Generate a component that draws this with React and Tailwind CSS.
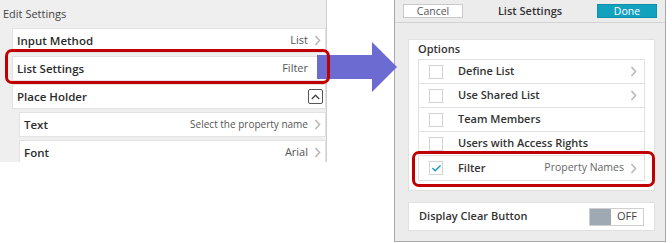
import { Check } from "lucide-react";

const font = { fontFamily: '"Open Sans", "Noto Sans", sans-serif' };

const Chevron = ({ className = "" }) => (
  <svg width="7" height="11" viewBox="0 0 7 11" className={className}>
    <polyline points="1.5,1 5.5,5.5 1.5,10" fill="none" stroke="#b9b9b9" strokeWidth="1.6" />
  </svg>
);

const LeftRow = ({ label, value, small, chevron = true, indent }) => (
  <div
    className={`flex items-center h-[25px] bg-white border border-[#e2e2e2] pl-[4px] pr-[4px] ${
      indent ? "ml-[7px]" : ""
    }`}
  >
    <span className="text-[11.5px] font-semibold text-[#2b2b2b]">{label}</span>
    <span className={`ml-auto text-[#555] ${small ? "text-[10px]" : "text-[11px]"}`}>{value}</span>
    <span className="w-[13px] flex justify-end">{chevron && <Chevron />}</span>
  </div>
);

const OptionRow = ({ label, value, checked, chevron }) => (
  <div className="flex items-center h-[24px] border-b border-[#e0e0e0] last:border-b-0">
    <div className="ml-[10px] w-[14px] h-[14px] border border-[#d4d4d4] bg-white flex items-center justify-center">
      {checked && <Check className="w-[11px] h-[11px] text-[#1597c9]" strokeWidth={3} />}
    </div>
    <span className="ml-[15px] text-[11px] font-semibold text-[#333]">{label}</span>
    {value && <span className="ml-auto text-[10.5px] text-[#666]">{value}</span>}
    <span className={`${value ? "" : "ml-auto"} w-[20px] flex justify-start pl-[6px]`}>
      {chevron && <Chevron />}
    </span>
  </div>
);

export default function App() {
  return (
    <div className="relative w-[672px] h-[243px] bg-white overflow-hidden" style={font}>
      <div className="flex items-start">
        {/* Edit settings panel */}
        <div className="w-[327px] h-[162px] bg-[#efefef] border-r border-[#cfcfcf] overflow-hidden">
          <div className="h-[28px] pl-[3px] pt-[6px] text-[11px] text-[#444]">Edit Settings</div>
          <div className="pl-[12px] flex flex-col gap-[3px]">
            <LeftRow label="Input Method" value="List" />
            <LeftRow label="List Settings" value="Filter" chevron={false} />
            <div className="flex items-center h-[25px] bg-white border border-[#e2e2e2] pl-[4px] pr-[2px]">
              <span className="text-[11.5px] font-semibold text-[#2b2b2b]">Place Holder</span>
              <div className="ml-auto w-[15px] h-[15px] border border-[#555] rounded-[2px] bg-white flex items-center justify-center">
                <svg width="9" height="6" viewBox="0 0 9 6">
                  <polyline points="0.8,5 4.5,1.2 8.2,5" fill="none" stroke="#444" strokeWidth="1.3" />
                </svg>
              </div>
            </div>
            <LeftRow label="Text" value="Select the property name" small indent />
            <LeftRow label="Font" value="Arial" indent />
          </div>
        </div>

        {/* List settings panel */}
        <div className="ml-[67px] w-[272px] h-[242px] bg-[#ececec] border border-[#a9a9a9] border-t-0 flex flex-col">
          <div className="h-[23px] flex items-center px-[8px] border-b border-[#d2d2d2]">
            <button className="w-[60px] h-[14px] bg-white border border-[#c9c9c9] text-[10.5px] leading-none text-[#555]">
              Cancel
            </button>
            <span className="flex-1 text-center text-[11px] font-semibold text-[#333]">List Settings</span>
            <button className="w-[60px] h-[14px] bg-[#13a1c0] border border-[#0e8ea9] text-[10.5px] leading-none text-white">
              Done
            </button>
          </div>

          <div className="mt-[16px] ml-[13px] mr-[10px] bg-white border border-[#e0e0e0] px-[9px] pb-[9px]">
            <div className="h-[19px] pt-[3px] text-[11px] font-semibold text-[#333] leading-none">Options</div>
            <div className="border border-[#e0e0e0]">
              <OptionRow label="Define List" chevron />
              <OptionRow label="Use Shared List" chevron />
              <OptionRow label="Team Members" />
              <OptionRow label="Users with Access Rights" />
              <OptionRow label="Filter" value="Property Names" checked chevron />
            </div>
          </div>

          <div className="mt-[11px] ml-[13px] mr-[10px] h-[29px] bg-white border border-[#e0e0e0] flex items-center px-[10px]">
            <span className="text-[11px] font-semibold text-[#333]">Display Clear Button</span>
            <div className="ml-auto flex h-[18px] w-[55px] border border-[#cfcfcf]">
              <div className="w-[21px] bg-[#9ea9b3]" />
              <div className="flex-1 flex items-center justify-center text-[11px] text-[#444]">OFF</div>
            </div>
          </div>
        </div>
      </div>

      {/* annotations */}
      <svg className="absolute left-[317px] top-[42px]" width="81" height="50" viewBox="0 0 81 50">
        <polygon points="0,13 55,13 55,0 80,25 55,50 55,37 0,37" fill="#6b6bd1" />
      </svg>
      <div className="absolute left-[5px] top-[49px] w-[325px] h-[35px] border-[3px] border-[#c00000] rounded-[7px]" />
      <div className="absolute left-[412px] top-[151px] w-[243px] h-[36px] border-[3px] border-[#c00000] rounded-[7px]" />
    </div>
  );
}
